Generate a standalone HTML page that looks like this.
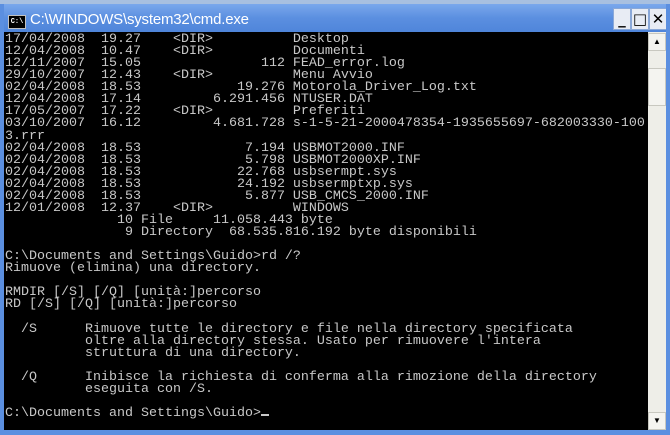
<!DOCTYPE html>
<html><head><style>
body{margin:0;width:670px;height:435px;overflow:hidden;background:#c8d8f0;position:relative;font-family:"Liberation Sans",sans-serif}
#top{position:absolute;left:0;top:0;width:670px;height:5px;background:#a8c0e0}
#title{position:absolute;left:0;top:4px;width:670px;height:28px;background:linear-gradient(#7aa8ec,#5b8fe0 50%,#4f85da)}
#ttext{position:absolute;left:30px;top:7px;color:#fff;font-size:15px;letter-spacing:-0.2px}
#icon{position:absolute;left:8px;top:11px;width:16px;height:12px;background:#000;border:1px solid #c0c0c0;color:#fff;font:bold 7px "Liberation Mono",monospace;line-height:12px;text-align:center}
.btn{position:absolute;top:8px;width:16px;height:20px;background:#e8ecf4;border:1px solid #8aa8d8;font:bold 15px "DejaVu Sans",sans-serif;text-align:center;line-height:20px;color:#000}
#con{position:absolute;left:4px;top:32px;width:644px;height:398px;background:#000}
pre{margin:0;position:absolute;left:1px;top:2px;color:#c8c8c8;font-family:"Liberation Mono",monospace;font-size:13.33px;line-height:12.06px;letter-spacing:0}
#sb{position:absolute;left:648px;top:32px;width:18px;height:398px;background:#eeeee8}
.sbtn{position:absolute;left:0;width:16px;height:16px;background:#f4f4f0;border:1px solid #c8c8c0;font-size:8px;text-align:center;line-height:16px}
#thumb{position:absolute;left:0;top:36px;width:16px;height:36px;background:#f4f4f0;border:1px solid #c8c8c0}
#bot{position:absolute;left:0;top:430px;width:670px;height:5px;background:#5b8fe0}
#rb{position:absolute;left:666px;top:4px;width:4px;height:431px;background:#5b8fe0}
#lb{position:absolute;left:0;top:4px;width:4px;height:431px;background:#5b8fe0}
.cur{display:inline-block;width:8px;height:2px;background:#c8c8c8;vertical-align:baseline}
</style></head><body>
<div id="top"></div>
<div id="title"><div id="icon">C:\</div><div id="ttext">C:\WINDOWS\system32\cmd.exe</div></div>
<div class="btn" style="left:613px">_</div>
<div class="btn" style="left:631px">□</div>
<div class="btn" style="left:649px">✕</div>
<div id="lb"></div><div id="rb"></div><div id="bot"></div>
<div id="con"><pre>17/04/2008  19.27    &lt;DIR&gt;          Desktop
12/04/2008  10.47    &lt;DIR&gt;          Documenti
12/11/2007  15.05               112 FEAD_error.log
29/10/2007  12.43    &lt;DIR&gt;          Menu Avvio
02/04/2008  18.53            19.276 Motorola_Driver_Log.txt
12/04/2008  17.14         6.291.456 NTUSER.DAT
17/05/2007  17.22    &lt;DIR&gt;          Preferiti
03/10/2007  16.12         4.681.728 s-1-5-21-2000478354-1935655697-682003330-100
3.rrr
02/04/2008  18.53             7.194 USBMOT2000.INF
02/04/2008  18.53             5.798 USBMOT2000XP.INF
02/04/2008  18.53            22.768 usbsermpt.sys
02/04/2008  18.53            24.192 usbsermptxp.sys
02/04/2008  18.53             5.877 USB_CMCS_2000.INF
12/01/2008  12.37    &lt;DIR&gt;          WINDOWS
              10 File     11.058.443 byte
               9 Directory  68.535.816.192 byte disponibili

C:\Documents and Settings\Guido&gt;rd /?
Rimuove (elimina) una directory.

RMDIR [/S] [/Q] [unità:]percorso
RD [/S] [/Q] [unità:]percorso

  /S      Rimuove tutte le directory e file nella directory specificata
          oltre alla directory stessa. Usato per rimuovere l'intera
          struttura di una directory.

  /Q      Inibisce la richiesta di conferma alla rimozione della directory
          eseguita con /S.

C:\Documents and Settings\Guido&gt;<span class="cur"></span></pre></div>
<div id="sb"><div class="sbtn" style="top:1px">▲</div><div id="thumb"></div><div class="sbtn" style="top:380px">▼</div></div>
</body></html>
